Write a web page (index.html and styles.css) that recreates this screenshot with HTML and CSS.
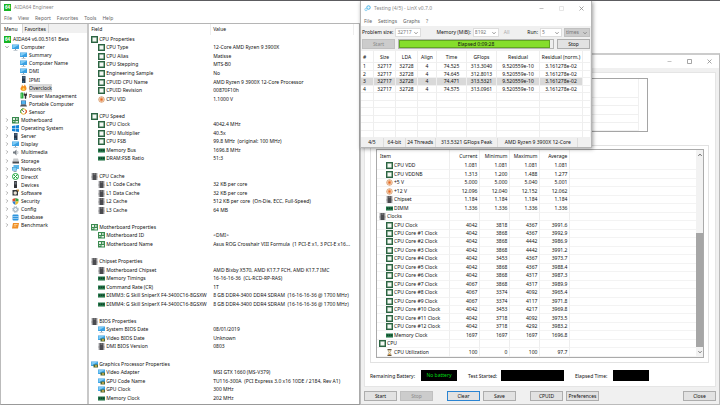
FILE: index.html
```html
<!DOCTYPE html>
<html lang="en">
<head>
    <meta charset="UTF-8">
    <meta name="viewport" content="width=device-width, initial-scale=1.0">
    <title>AIDA64 Engineer</title>
    <link rel="stylesheet" href="styles.css">
</head>
<body>

    <svg class="sprite" aria-hidden="true">
        <symbol id="i-logo" viewBox="0 0 14 14" overflow="visible"><rect width="14" height="14" fill="#16b422"/><text x="7" y="10" text-anchor="middle" font-size="9" font-weight="700" fill="#fff">64</text></symbol>
        <symbol id="i-cpu" viewBox="0 0 14 14"><rect x="1.500" y="1.500" width="11" height="11" fill="#f4f8f4" stroke="#2c6442" stroke-width="3"/><rect x="3.500" y="3.500" width="7" height="7" fill="none" stroke="#9dbca6" stroke-width="1"/></symbol>
        <symbol id="i-volt" viewBox="0 0 14 14"><circle cx="7" cy="7" r="5.6" fill="#fbe3cc" stroke="#c98248" stroke-width="1.3"/><path d="M7 3v8M3.5 7h7M4.5 4.5l5 5M9.500 4.500l-5 5" stroke="#e2641c" stroke-width="1.4"/></symbol>
        <symbol id="i-ram" viewBox="0 0 14 14"><rect x="0" y="3" width="14" height="8" fill="#1f7546"/><path d="M2 5h2.500v3H2zM6 5h2.500v3H6zM10 5h2.500v3H10z" fill="#16402b"/><path d="M0 10.500h14" stroke="#7d9f80" stroke-width="1" stroke-dasharray="1 1"/></symbol>
        <symbol id="i-chip" viewBox="0 0 14 14"><path d="M3 0h8v14H3z" fill="#4a4a4e"/><path d="M2 1v13M12 1v13" stroke="#55555a" stroke-width="2" stroke-dasharray="1.500 1"/><path d="M5 2h4" stroke="#b5b5b5" stroke-width="1.5"/></symbol>
        <symbol id="i-board" viewBox="0 0 14 14"><rect width="14" height="13" fill="#3b8a50"/><path d="M2 2h4v4H2zM8 2h1.500v4H8zM11 2h1v4h-1zM2 8h3v1.500H2zM7 8h5v3H7z" fill="#e6f2e6"/></symbol>
        <symbol id="i-monitor" viewBox="0 0 14 14"><rect x="0" y="1" width="14" height="9" fill="#3aa0e2"/><path d="M1 2h12L1 9z" fill="#7fcbf5"/><path d="M6 10h2v2h3v1H3v-1h3z" fill="#8a9aa8"/></symbol>
        <symbol id="i-gpu" viewBox="0 0 14 14"><rect x="0" y="1" width="14" height="9" fill="#3aa0e2"/><path d="M1 2h12L1 9z" fill="#7fcbf5"/><rect x="5" y="7" width="9" height="6" fill="#4e6a35"/><circle cx="10" cy="10" r="2" fill="#d7b24c"/></symbol>
        <symbol id="i-server" viewBox="0 0 14 14"><path d="M4 0h7v14H4z" fill="#26364a"/><path d="M5 2h5M5 4h5" stroke="#7fa3c8" stroke-width="1"/><path d="M5 12h3" stroke="#4bb8ef" stroke-width="1.5"/></symbol>
        <symbol id="i-flame" viewBox="0 0 14 14"><path d="M4 1c1 2 2 2 2 4 2-1 3-2 3-4 2 2 4 5 4 8 0 3-2 5-6 5s-6-2-6-5c0-2 3-4 3-8z" fill="#f59121"/><path d="M7 7c2 2 3 3 2 6H5c-1-2 0-4 2-6z" fill="#ffd45c"/></symbol>
        <symbol id="i-power" viewBox="0 0 14 14"><rect x="1" y="1" width="6" height="12" rx="1" fill="#27ab3d"/><path d="M2.500 3v8" stroke="#8fe391" stroke-width="1.500"/><path d="M9 1v3M13 1v3M8 4h6v3h-2v6h-2V7H8z" fill="#333" stroke="#333"/></symbol>
        <symbol id="i-laptop" viewBox="0 0 14 14"><rect x="2" y="1" width="10" height="8" fill="#2b5f93"/><rect x="3" y="2" width="8" height="6" fill="#53b4ee"/><path d="M2 9h10l2 4H0z" fill="#50565e"/></symbol>
        <symbol id="i-sensor" viewBox="0 0 14 14"><circle cx="7" cy="7" r="5.500" fill="#fff" stroke="#e5ad2e" stroke-width="2"/><path d="M7 1.500A5.500 5.500 0 0 0 2 10" fill="none" stroke="#2fa345" stroke-width="2"/><path d="M12 4a5.500 5.500 0 0 1-1 7" fill="none" stroke="#d8352a" stroke-width="2"/><path d="M4 4l4 4" stroke="#444" stroke-width="1.500"/></symbol>
        <symbol id="i-windows" viewBox="0 0 14 14"><path d="M0 2l6-1v5.500H0zM7 1l7-1v6.500H7zM0 7.500h6V13l-6-1zM7 7.500h7V14l-7-1z" fill="#1583d8"/></symbol>
        <symbol id="i-speaker" viewBox="0 0 14 14"><path d="M2 5h3l4-4v12L5 9H2z" fill="#747b82"/><path d="M11 4c1 2 1 4 0 6" fill="none" stroke="#9aa3ab" stroke-width="1.500"/></symbol>
        <symbol id="i-storage" viewBox="0 0 14 14"><path d="M3 3h9l2 6H1z" fill="#c7c9cb"/><path d="M1 9h13v4H1z" fill="#4b4d50"/></symbol>
        <symbol id="i-network" viewBox="0 0 14 14"><rect x="3" y="0" width="11" height="8" fill="#5bb7ea"/><rect x="0" y="4" width="10" height="7" fill="#3591cd"/><rect x="1" y="5" width="8" height="5" fill="#85d0f3"/><path d="M3 13h6" stroke="#708595" stroke-width="1.500"/></symbol>
        <symbol id="i-directx" viewBox="0 0 14 14"><circle cx="7" cy="7" r="6" fill="#fff" stroke="#1da53b" stroke-width="2"/><path d="M3 3l8 8M11 3l-8 8" stroke="#1da53b" stroke-width="2"/></symbol>
        <symbol id="i-devices" viewBox="0 0 14 14"><rect x="4" y="0" width="6" height="14" rx="1" fill="#303236"/><rect x="5" y="2" width="4" height="5" fill="#6b7178"/></symbol>
        <symbol id="i-software" viewBox="0 0 14 14"><rect x="1" y="2" width="11" height="11" fill="#35383c"/><circle cx="6.500" cy="8" r="3.500" fill="#e9e3d4"/><path d="M8 1h6v5z" fill="#c7913f"/></symbol>
        <symbol id="i-security" viewBox="0 0 14 14"><path d="M7 0L1 2v5h6z" fill="#dd4a2b"/><path d="M7 0l6 2v5H7z" fill="#3aa545"/><path d="M1 7h6v7C3 12 1 10 1 7z" fill="#2b7fd4"/><path d="M13 7H7v7c4-2 6-4 6-7z" fill="#efbd2b"/></symbol>
        <symbol id="i-config" viewBox="0 0 14 14"><circle cx="7" cy="7" r="4" fill="#eef3f7" stroke="#93a6b5" stroke-width="2"/><circle cx="7" cy="7" r="6" fill="none" stroke="#93a6b5" stroke-width="2" stroke-dasharray="2 2.700"/></symbol>
        <symbol id="i-database" viewBox="0 0 14 14"><rect x="1" y="1" width="12" height="12" rx="2" fill="#2c93dd"/><path d="M1 5h12M1 9h12" stroke="#cfe9fa" stroke-width="1.200"/></symbol>
        <symbol id="i-bench" viewBox="0 0 14 14"><path d="M2 2h12l-2 11H0z" fill="#ef8e25"/><path d="M4 5h7M3.500 8h5" stroke="#ffe0ae" stroke-width="1.500"/></symbol>
        <symbol id="i-hourglass" viewBox="0 0 14 14"><path d="M3 1h8M3 13h8" stroke="#5a4a35" stroke-width="2"/><path d="M4 2h6c0 3-2 4-2 5s2 2 2 5H4c0-3 2-4 2-5S4 5 4 2z" fill="#f3e6c4" stroke="#857353"/><path d="M5 12l2-3 2 3z" fill="#e08b22"/></symbol>
        <symbol id="i-linx" viewBox="0 0 14 14"><circle cx="9" cy="5" r="3.500" fill="#e9f7fe" stroke="#4bb5e8" stroke-width="2"/><circle cx="4" cy="9" r="2.500" fill="#e9f7fe" stroke="#7fcaed" stroke-width="1.500"/></symbol>
        <symbol id="i-min" viewBox="0 0 10 10"><path d="M1 5h8" stroke="currentColor" fill="none"/></symbol>
        <symbol id="i-max" viewBox="0 0 10 10"><path d="M1 1h8v8H1z" stroke="currentColor" stroke-width="1.500" fill="none"/></symbol>
        <symbol id="i-close" viewBox="0 0 10 10"><path d="M1 1l8 8M9 1L1 9" stroke="currentColor" stroke-width="1.500" fill="none"/></symbol>
        <symbol id="i-right" viewBox="0 0 10 10"><path d="M3 1l4 4-4 4" stroke="currentColor" stroke-width="1.500" fill="none"/></symbol>
        <symbol id="i-down" viewBox="0 0 10 10"><path d="M1 3l4 4 4-4" stroke="currentColor" stroke-width="2" fill="none"/></symbol>
        <symbol id="i-up" viewBox="0 0 10 10"><path d="M1 7l4-4 4 4" stroke="currentColor" stroke-width="2.500" fill="none"/></symbol>
    </svg>

    <main class="desktop">

        <section class="window aida">
            <header class="titlebar"><svg class="icon"><use href="#i-logo"/></svg><span>AIDA64 Engineer</span></header>
            <nav class="menubar">
                <button>File</button><button>View</button><button>Report</button><button>Favorites</button><button>Tools</button><button>Help</button>
            </nav>
            <div class="aida-body">
                <aside class="sidebar">
                    <div class="tabs"><button class="tab active">Menu</button><button class="tab">Favorites</button></div>
                    <ul class="tree" id="tree"></ul>
                </aside>
                <div class="details">
                    <table class="info">
                        <colgroup><col class="c-field"><col class="c-value"><col></colgroup>
                        <thead><tr><th>Field</th><th>Value</th><th></th></tr></thead>
                        <tbody id="info"></tbody>
                    </table>
                </div>
            </div>
        </section>

        <section class="window stability">
            <header class="titlebar">
                <div class="controls">
                    <button aria-label="Minimize"><svg><use href="#i-min"/></svg></button>
                    <button aria-label="Maximize"><svg><use href="#i-max"/></svg></button>
                    <button aria-label="Close"><svg><use href="#i-close"/></svg></button>
                </div>
            </header>
            <div class="stab-panel">
                <div class="log"><i></i><i></i><i></i><i></i><i></i></div>
                <div class="group">
                    <div class="sensor-box">
                        <table class="sensors">
                            <colgroup><col class="c-item"><col class="c-num"><col class="c-num"><col class="c-num"><col class="c-num"><col></colgroup>
                            <thead><tr><th>Item</th><th>Current</th><th>Minimum</th><th>Maximum</th><th>Average</th><th></th></tr></thead>
                            <tbody id="sensors"></tbody>
                        </table>
                        <div class="scrollbar">
                            <svg><use href="#i-up"/></svg>
                            <div class="track"><div class="thumb"></div></div>
                            <svg><use href="#i-down"/></svg>
                        </div>
                    </div>
                </div>
                <div class="status">
                    <span class="lbl">Remaining Battery:</span><output class="led">No battery</output>
                    <span class="lbl">Test Started:</span><output class="led wide"></output>
                    <span class="lbl">Elapsed Time:</span><output class="led"></output>
                </div>
            </div>
            <footer class="buttons">
                <button class="btn">Start</button>
                <button class="btn" disabled>Stop</button>
                <button class="btn focus">Clear</button>
                <button class="btn">Save</button>
                <button class="btn apart">CPUID</button>
                <button class="btn">Preferences</button>
                <button class="btn last">Close</button>
            </footer>
        </section>

        <section class="window linx">
            <header class="titlebar">
                <svg class="icon"><use href="#i-linx"/></svg><span>Testing (4/5) - LinX v0.7.0</span>
                <div class="controls">
                    <button aria-label="Minimize"><svg><use href="#i-min"/></svg></button>
                    <button aria-label="Maximize" disabled><svg><use href="#i-max"/></svg></button>
                    <button aria-label="Close"><svg><use href="#i-close"/></svg></button>
                </div>
            </header>
            <nav class="menubar">
                <button>File</button><button>Settings</button><button>Graphs</button><button>?</button>
            </nav>
            <div class="toolbar">
                <div class="fields">
                    <label for="size">Problem size:</label>
                    <span class="combo"><select id="size"><option>32717</option></select><svg><use href="#i-down"/></svg></span>
                    <label for="memory" class="memory">Memory (MiB):</label>
                    <span class="combo"><select id="memory"><option>8192</option></select><svg><use href="#i-down"/></svg></span>
                    <span class="all">All</span>
                    <label for="run" class="run">Run:</label>
                    <span class="combo small"><select id="run"><option>5</option></select><svg><use href="#i-down"/></svg></span>
                    <span class="combo off"><select aria-label="Unit" disabled><option>times</option></select><svg><use href="#i-down"/></svg></span>
                </div>
                <div class="actions">
                    <button class="btn" disabled>Start</button>
                    <div class="meter"><progress value="98" max="100" aria-labelledby="elapsed"></progress><span id="elapsed">Elapsed 0:09:28</span></div>
                    <button class="btn">Stop</button>
                </div>
            </div>
            <table class="runs">
                <colgroup><col class="r-no"><col class="r-sm"><col class="r-sm"><col class="r-al"><col class="r-md"><col class="r-md"><col class="r-lg"><col class="r-lg"><col></colgroup>
                <thead><tr><th>#</th><th>Size</th><th>LDA</th><th>Align</th><th>Time</th><th>GFlops</th><th>Residual</th><th>Residual (norm.)</th><th></th></tr></thead>
                <tbody id="runs"></tbody>
            </table>
            <footer class="linx-status">
                <span>4/5</span><span>64-bit</span><span>24 Threads</span><span>313.5321 GFlops Peak</span><span>AMD Ryzen 9 3900X 12-Core</span><span></span>
            </footer>
        </section>

    </main>

    <script>
        // icon, label, level (0 root, 1 category, 2 page), open
        const tree = [
            ['logo', 'AIDA64 v6.00.5161 Beta', 0], ['monitor', 'Computer', 1, true],
            ['monitor', 'Summary', 2], ['monitor', 'Computer Name', 2], ['monitor', 'DMI', 2],
            ['server', 'IPMI', 2], ['flame', 'Overclock', 2], ['power', 'Power Management', 2],
            ['laptop', 'Portable Computer', 2], ['sensor', 'Sensor', 2],
            ['board', 'Motherboard', 1], ['windows', 'Operating System', 1], ['server', 'Server', 1],
            ['monitor', 'Display', 1], ['speaker', 'Multimedia', 1], ['storage', 'Storage', 1],
            ['network', 'Network', 1], ['directx', 'DirectX', 1], ['devices', 'Devices', 1],
            ['software', 'Software', 1], ['security', 'Security', 1], ['config', 'Config', 1],
            ['database', 'Database', 1], ['bench', 'Benchmark', 1]
        ];

        // one value = group heading, empty = spacer row
        const info = [
            ['cpu', 'CPU Properties'],
            ['cpu', 'CPU Type', '12-Core AMD Ryzen 9 3900X'],
            ['cpu', 'CPU Alias', 'Matisse'],
            ['cpu', 'CPU Stepping', 'MTS-B0'],
            ['cpu', 'Engineering Sample', 'No'],
            ['cpu', 'CPUID CPU Name', 'AMD Ryzen 9 3900X 12-Core Processor'],
            ['cpu', 'CPUID Revision', '00870F10h'],
            ['volt', 'CPU VID', '1.1000 V'],
            [],
            ['cpu', 'CPU Speed'],
            ['cpu', 'CPU Clock', '4042.4 MHz'],
            ['cpu', 'CPU Multiplier', '40.5x'],
            ['cpu', 'CPU FSB', '99.8 MHz  (original: 100 MHz)'],
            ['ram', 'Memory Bus', '1696.8 MHz'],
            ['ram', 'DRAM:FSB Ratio', '51:3'],
            [],
            ['chip', 'CPU Cache'],
            ['chip', 'L1 Code Cache', '32 KB per core'],
            ['chip', 'L1 Data Cache', '32 KB per core'],
            ['chip', 'L2 Cache', '512 KB per core  (On-Die, ECC, Full-Speed)'],
            ['chip', 'L3 Cache', '64 MB'],
            [],
            ['board', 'Motherboard Properties'],
            ['board', 'Motherboard ID', '<DMI>'],
            ['board', 'Motherboard Name', 'Asus ROG Crosshair VIII Formula  (1 PCI-E x1, 3 PCI-E x16...'],
            [],
            ['chip', 'Chipset Properties'],
            ['chip', 'Motherboard Chipset', 'AMD Bixby X570, AMD K17.7 FCH, AMD K17.7 IMC'],
            ['ram', 'Memory Timings', '16-16-16-36  (CL-RCD-RP-RAS)'],
            ['ram', 'Command Rate (CR)', '1T'],
            ['ram', 'DIMM3: G Skill SniperX F4-3400C16-8GSXW', '8 GB DDR4-3400 DDR4 SDRAM  (16-16-16-36 @ 1700 MHz)'],
            ['ram', 'DIMM4: G Skill SniperX F4-3400C16-8GSXW', '8 GB DDR4-3400 DDR4 SDRAM  (16-16-16-36 @ 1700 MHz)'],
            [],
            ['chip', 'BIOS Properties'],
            ['monitor', 'System BIOS Date', '08/01/2019'],
            ['gpu', 'Video BIOS Date', 'Unknown'],
            ['chip', 'DMI BIOS Version', '0803'],
            [],
            ['gpu', 'Graphics Processor Properties'],
            ['gpu', 'Video Adapter', 'MSI GTX 1660 (MS-V379)'],
            ['gpu', 'GPU Code Name', 'TU116-300A  (PCI Express 3.0 x16 10DE / 2184, Rev A1)'],
            ['gpu', 'GPU Clock', '300 MHz'],
            ['ram', 'Memory Clock', '202 MHz']
        ];

        const sensors = [
            ['cpu', 'CPU VDD', '1.081', '1.081', '1.081', '1.081'],
            ['cpu', 'CPU VDDNB', '1.313', '1.200', '1.488', '1.277'],
            ['volt', '+5 V', '5.000', '5.000', '5.040', '5.001'],
            ['volt', '+12 V', '12.096', '12.040', '12.152', '12.062'],
            ['chip', 'Chipset', '1.184', '1.184', '1.184', '1.184'],
            ['ram', 'DIMM', '1.336', '1.336', '1.336', '1.336'],
            ['chip', 'Clocks'],
            ['cpu', 'CPU Clock', '4042', '3818', '4367', '3991.6'],
            ['cpu', 'CPU Core #1 Clock', '4042', '3868', '4367', '3992.9'],
            ['cpu', 'CPU Core #2 Clock', '4042', '3868', '4442', '3986.9'],
            ['cpu', 'CPU Core #3 Clock', '4042', '3868', '4442', '3991.2'],
            ['cpu', 'CPU Core #4 Clock', '4042', '3453', '4367', '3973.7'],
            ['cpu', 'CPU Core #5 Clock', '4042', '3868', '4367', '3988.4'],
            ['cpu', 'CPU Core #6 Clock', '4042', '3868', '4317', '3987.3'],
            ['cpu', 'CPU Core #7 Clock', '4067', '3868', '4317', '3989.9'],
            ['cpu', 'CPU Core #8 Clock', '4067', '3374', '4092', '3965.4'],
            ['cpu', 'CPU Core #9 Clock', '4067', '3374', '4117', '3971.8'],
            ['cpu', 'CPU Core #10 Clock', '4042', '3453', '4217', '3969.8'],
            ['cpu', 'CPU Core #11 Clock', '4042', '3718', '4092', '3973.5'],
            ['cpu', 'CPU Core #12 Clock', '4042', '3718', '4292', '3983.2'],
            ['ram', 'Memory Clock', '1697', '1697', '1697', '1696.8'],
            ['cpu', 'CPU'],
            ['hourglass', 'CPU Utilization', '100', '0', '100', '97.7']
        ];

        const runs = [
            ['1', '32717', '32728', '4', '74.525', '313.3040', '9.520559e-10', '3.161278e-02'],
            ['2', '32717', '32728', '4', '74.645', '312.8013', '9.520559e-10', '3.161278e-02'],
            ['3', '32717', '32728', '4', '74.471', '313.5321', '9.520559e-10', '3.161278e-02'],
            ['4', '32717', '32728', '4', '74.575', '313.0961', '9.520559e-10', '3.161278e-02'],
            [], [], [], [], [], []
        ];

        const icon = name => `<svg class="icon"><use href="#i-${name}"/></svg>`;
        const esc = s => s.replace(/</g, '&lt;').replace(/>/g, '&gt;');

        function item(row) {
            if (!row.length) return '';
            const cls = row.length > 2 ? 'item child' : 'item';
            return `<span class="${cls}">${icon(row[0])}${esc(row[1])}</span>`;
        }

        function fill(row, count) {
            let html = '';
            for (let i = 0; i < count; i++) html += `<td>${esc(row[i] || '')}</td>`;
            return html;
        }

        document.getElementById('tree').innerHTML = tree.map(([ic, label, level, open]) => {
            const arrow = level === 1 ? `<svg class="arrow"><use href="#i-${open ? 'down' : 'right'}"/></svg>` : '';
            const sel = label === 'Overclock' ? ' class="selected"' : '';
            return `<li class="level${level}">${arrow}${icon(ic)}<span${sel}>${label}</span></li>`;
        }).join('');

        document.getElementById('info').innerHTML =
            info.map(r => `<tr><td>${item(r)}</td>${fill(r.slice(2), 2)}</tr>`).join('');

        document.getElementById('sensors').innerHTML =
            sensors.map(r => `<tr><td>${item(r)}</td>${fill(r.slice(2), 5)}</tr>`).join('');

        document.getElementById('runs').innerHTML =
            runs.map((r, i) => `<tr${i === 2 ? ' class="current"' : ''}>${fill(r, 9)}</tr>`).join('');
    </script>
</body>
</html>
```
FILE: styles.css
```css
* {
    box-sizing: border-box;
}

body {
    margin: 0;
    background: #fff;
    color: #111;
    font-family: "Noto Sans", "Open Sans", sans-serif;
    font-size: 5px;
    line-height: 8px;
}

button, select {
    font: inherit;
    color: inherit;
    margin: 0;
    padding: 0;
    border: 0;
    background: none;
}

svg {
    display: block;
    flex: none;
    overflow: visible;
}

.sprite {
    position: absolute;
    width: 0;
    height: 0;
}

.icon {
    width: 7px;
    height: 7px;
}

/* Desktop and windows */
.desktop {
    position: relative;
    height: 100vh;
    overflow: hidden;
    border-top: 1px solid #5c5c60;
}

.window {
    position: absolute;
    display: flex;
    flex-direction: column;
    background: #fff;
}

.titlebar {
    display: flex;
    align-items: center;
    gap: 3px;
    height: 12px;
    padding-left: 3px;
    color: #888;
    flex: none;
}

.controls {
    display: flex;
    margin-left: auto;
}

.controls button {
    width: 20px;
    display: flex;
    justify-content: center;
}

.controls button:disabled {
    color: #ddd;
}

.controls svg {
    width: 5px;
    height: 5px;
}

.menubar {
    display: flex;
    gap: 6px;
    height: 10px;
    padding-left: 3px;
    color: #666;
    flex: none;
}

table {
    border-collapse: separate;
    border-spacing: 0;
    table-layout: fixed;
    width: 100%;
}

th, td {
    height: 8px;
    padding: 0;
    font-weight: 400;
    text-align: left;
    white-space: pre;
    line-height: 7px;
}

.item {
    display: flex;
    align-items: center;
    gap: 1px;
}

.item.child {
    padding-left: 7px;
}

/* AIDA64 main window */
.aida {
    left: 0;
    top: 0;
    bottom: 0;
    width: 50%;
    border-left: 1px solid #bbb;
    border-bottom: 1px solid #999;
}

.aida-body {
    flex: 1;
    min-height: 0;
    display: flex;
    border-top: 1px solid #b5b5b5;
}

.sidebar {
    width: 24%;
    padding-left: 1px;
    background: #fff;
}

.tabs {
    display: flex;
    height: 9px;
    background: #f0f0f0;
}

.tab {
    padding: 0 2px;
    border-right: 1px solid #d5d5d5;
}

.tab.active {
    background: #fff;
    padding-right: 4px;
}

.tree {
    display: grid;
    grid-auto-rows: 1fr;
    height: 48vh;
    margin: 2px 0 0;
    padding: 0 0 0 2px;
    list-style: none;
}

.tree li {
    display: flex;
    align-items: center;
    gap: 2px;
    white-space: nowrap;
}

.tree .level2 {
    padding-left: 16px;
}

.arrow {
    width: 4px;
    height: 4px;
    margin: 0 1px;
    color: #777;
}

.tree .selected {
    background: #d9d9d9;
}

.details {
    flex: 1;
    min-width: 0;
    border-left: 2px solid #c8c8c8;
    border-right: 1px solid #aaa;
    padding: 0 0 1px 1px;
}

.info {
    height: 100%;
}

.info thead th {
    height: 11px;
}

.info th + th {
    border-left: 1px solid #eee;
}

.info th, .info td {
    padding-left: 1px;
}

.info th:nth-child(2) {
    padding-left: 2px;
}

.info td:nth-child(2) {
    padding-left: 3px;
}

.c-field {
    width: 120px;
}

.c-value {
    width: 53%;
}

/* System stability test */
.stability {
    left: 50%;
    right: 0;
    top: 52px;
    bottom: 0;
    padding: 0 3px;
    background: #f0f0f0;
    border: 1px solid #bbb;
    border-top: 2px solid #ccc;
}

.stability .titlebar {
    height: 13px;
    margin: 0 -3px 4px;
    background: #fff;
}

.stab-panel {
    flex: 1;
    min-height: 0;
    display: flex;
    flex-direction: column;
    padding: 5px 6px 5px 5px;
    background: #fff;
    border: 1px solid #e5e5e5;
}

.log {
    height: 54px;
    flex: none;
    width: 82%;
    display: grid;
    grid-template-rows: 19px repeat(4, 1fr);
    padding-right: 8px;
    border: 1px solid #a5a5a5;
}

.log i {
    border-bottom: 1px solid #f0f0f0;
    border-right: 1px solid #f0f0f0;
}

.group {
    flex: 1;
    min-height: 0;
    margin-top: 13px;
    padding: 3px 4px 4px 5px;
    border: 1px solid #e2e2e2;
}

.sensor-box {
    display: flex;
    height: 100%;
    border: 1px solid #aaa;
}

.sensors {
    flex: 1;
    height: 100%;
}

.sensors thead th {
    height: 12px;
}

.sensors th, .sensors td {
    text-align: right;
    padding-right: 2px;
    border-right: 1px solid #eee;
}

.sensors td {
    border-bottom: 1px solid #f3f3f3;
}

.sensors th:first-child, .sensors td:first-child {
    text-align: left;
    padding-left: 3px;
}

.sensors td:first-child {
    padding-left: 2px;
}

.sensors th:last-child, .sensors td:last-child {
    border-right: 0;
}

.c-item {
    width: 23%;
}

.c-num {
    width: 30px;
}

.scrollbar {
    width: 7px;
    display: flex;
    flex-direction: column;
    align-items: center;
    gap: 3px;
    padding: 3px 0;
    background: #f2f2f2;
    color: #555;
}

.scrollbar svg {
    width: 4px;
    height: 4px;
}

.track {
    flex: 1;
    width: 100%;
    display: flex;
    flex-direction: column;
    justify-content: flex-end;
}

.thumb {
    width: 100%;
    height: 61%;
    background: #a6a6a6;
}

.status {
    display: flex;
    align-items: center;
    height: 11px;
    margin-top: 7px;
    flex: none;
}

.lbl {
    width: 51px;
    white-space: nowrap;
}

.led {
    width: 36px;
    height: 11px;
    line-height: 10px;
    margin-right: 11px;
    background: #000;
    color: #00dc14;
    text-align: center;
}

.led + .lbl {
    width: 33px;
}

.led.wide {
    width: 63px;
}

.led.wide + .lbl {
    width: 38px;
}

.btn {
    width: 33px;
    height: 10px;
    background: #e2e2e2;
    border: 1px solid #adadad;
    line-height: 8px;
    text-align: center;
    white-space: nowrap;
}

.btn:disabled {
    background: #ccc;
    border-color: #c0c0c0;
    color: #8a8a8a;
}

.btn.focus {
    border-color: #2a84d2;
}

.buttons {
    display: flex;
    gap: 3px;
    padding: 4px 0 3px;
    flex: none;
}

.btn.focus, .btn.apart {
    margin-left: 11px;
}

.btn.last {
    margin-left: auto;
}

/* LinX */
.linx {
    left: 50%;
    top: 0;
    width: 232px;
    height: 147px;
    border: 1px solid #b5b5b5;
    border-top: 0;
    box-shadow: 1px 1px 4px rgba(0, 0, 0, 0.4);
}

.linx .titlebar {
    height: 14px;
}

.linx .menubar {
    height: 11px;
}

.toolbar {
    padding: 1px 1px 2px;
    background: #f0f0f0;
}

.fields {
    display: flex;
    align-items: center;
    gap: 2px;
    height: 10px;
    margin-bottom: 2px;
    white-space: nowrap;
}

.combo {
    position: relative;
    width: 26px;
    height: 9px;
    background: #fff;
    border: 1px solid #ddd;
    color: #777;
}

.combo select {
    appearance: none;
    display: block;
    width: 100%;
    padding-left: 1px;
    line-height: 7px;
}

.combo select:disabled {
    opacity: 1;
}

.combo svg {
    position: absolute;
    right: 2px;
    top: 2px;
    width: 4px;
    height: 4px;
    pointer-events: none;
}

.combo.small {
    width: 22px;
}

.combo.off {
    background: #ccc;
    border-color: #c0c0c0;
}

.memory {
    margin-left: 13px;
}

.all {
    margin-left: 3px;
    color: #aaa;
}

.run {
    margin-left: auto;
}

.actions {
    display: flex;
    gap: 3px;
}

.meter {
    position: relative;
    flex: 1;
    height: 10px;
}

.meter progress {
    appearance: none;
    display: block;
    width: 100%;
    height: 10px;
    border: 1px solid #b5b5b5;
}

.meter progress::-webkit-progress-bar {
    background: #eee;
}

.meter progress::-webkit-progress-value {
    background: #86de2b;
    border: 1px solid #63a822;
}

.meter span {
    position: absolute;
    inset: 0;
    line-height: 10px;
    text-align: center;
}

.runs {
    flex: 1;
}

.runs thead th {
    height: 12px;
}

.runs th, .runs td {
    height: 7px;
    text-align: center;
    border-right: 1px solid #eee;
    border-bottom: 1px solid #f0f0f0;
    line-height: 6px;
}

.runs th:first-child, .runs td:first-child {
    text-align: left;
    padding-left: 2px;
}

.runs .current td:not(:last-child) {
    background: #d9d9d9;
}

.r-no {
    width: 13px;
}

.r-sm {
    width: 22px;
}

.r-al {
    width: 19px;
}

.r-md {
    width: 30px;
}

.r-lg {
    width: 43px;
}

.linx-status {
    display: grid;
    grid-template-columns: 22fr 22fr 30fr 63fr 80fr 14fr;
    height: 9px;
    flex: none;
    background: #f0f0f0;
    text-align: center;
    white-space: nowrap;
}

.linx-status span + span {
    border-left: 1px solid #ddd;
}
```
